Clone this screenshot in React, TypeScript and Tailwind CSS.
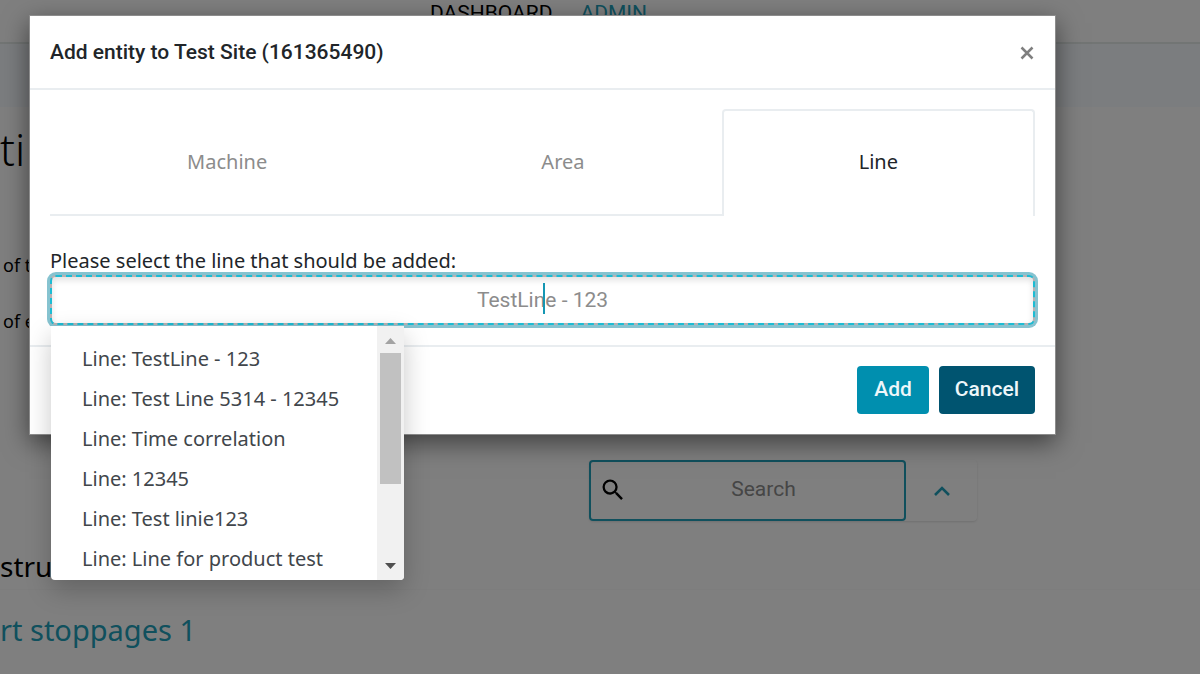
import React from "react";

const lines = [
  "Line: TestLine - 123",
  "Line: Test Line 5314 - 12345",
  "Line: Time correlation",
  "Line: 12345",
  "Line: Test linie123",
  "Line: Line for product test",
];

function Page() {
  return (
    <div className="min-h-screen overflow-hidden bg-white text-black">
      <header className="flex h-11 items-start gap-7 border-b-2 border-[#e4eae8] pl-[430px] font-['Roboto',sans-serif] text-[21px] leading-[26px]">
        <a href="#dashboard">DASHBOARD</a>
        <a href="#admin" className="text-[#20a0bb]">ADMIN</a>
      </header>
      <div className="h-[63px] bg-[#f6fafe]" />
      <main>
        <h1 className="h-[140px] pt-3 text-[44px] leading-[60px] font-light">ti</h1>
        <p className="h-14 pl-[3px] text-lg leading-9">of t</p>
        <p className="h-14 pl-[3px] text-lg leading-9">of e</p>
        <div className="mt-[101px] ml-[589px] flex h-[61px] w-[388px] rounded shadow-sm">
          <div className="flex min-w-0 flex-1 items-center rounded border-2 border-[#20a0bb] px-2 pb-0.5">
            <svg viewBox="0 0 24 24" className="size-7 shrink-0" aria-hidden="true">
              <path
                fill="currentColor"
                d="M15.5 14h-.79l-.28-.27A6.47 6.47 0 0 0 16 9.5 6.5 6.5 0 1 0 9.5 16c1.61 0 3.09-.59 4.23-1.57l.27.28v.79l5 4.99L20.49 19l-4.99-5zm-6 0C7.01 14 5 11.99 5 9.5S7.01 5 9.5 5 14 7.01 14 9.5 11.99 14 9.5 14z"
              />
            </svg>
            <input
              aria-label="Search"
              placeholder="Search"
              className="min-w-0 flex-1 bg-transparent pl-1 text-center font-['Roboto',sans-serif] text-[21px] outline-none placeholder:text-[#8c8c8c]"
            />
          </div>
          <button aria-label="Collapse" className="flex w-[71px] items-center justify-center text-[#20a0bb]">
            <svg viewBox="0 0 16 10" className="h-[10px] w-4" fill="none" stroke="currentColor" strokeWidth="2.6" aria-hidden="true">
              <path d="M1 9l7-7 7 7" />
            </svg>
          </button>
        </div>
        <h2 className="mt-6 h-[45px] border-b border-[#fafafa] text-[28px] leading-[42px]">stru</h2>
        <a href="#stoppages" className="block pt-5 text-[29px] leading-10 text-[#20a0bb]">
          rt stoppages 1
        </a>
      </main>
    </div>
  );
}

function LineSelect() {
  return (
    <div className="relative">
      <label htmlFor="line" className="block text-xl leading-7">
        Please select the line that should be added:
      </label>
      <div className="relative">
        <input
          id="line"
          role="combobox"
          aria-expanded="true"
          aria-controls="line-options"
          placeholder="TestLine - 123"
          className="block h-[50px] w-full rounded-md border-2 border-[#b9b1b1] bg-white text-center font-['Roboto',sans-serif] text-[21px] shadow-[inset_0_3px_6px_rgba(0,0,0,0.12),0_0_0_3px_#86c3d0] outline-2 -outline-offset-2 outline-dashed outline-[#1cbcd4] placeholder:text-[#8c8c8c]"
        />
        <span className="absolute top-2 left-1/2 h-[31px] w-0.5 bg-[#1597b3]" />
      </div>
      <div className="absolute top-full left-px mt-px flex h-[254px] w-[353px] overflow-hidden rounded-b bg-white shadow-[0_10px_26px_rgba(0,0,0,0.22)]">
        <ul id="line-options" role="listbox" aria-label="Lines" className="min-w-0 flex-1 pt-[13px]">
          {lines.map((line) => (
            <li key={line} role="option" aria-selected="false" className="h-10 pl-[31px] text-xl leading-10 whitespace-nowrap text-[#41464b]">
              {line}
            </li>
          ))}
        </ul>
        <div className="flex w-[27px] flex-col items-center bg-[#f1f1f1]" aria-hidden="true">
          <svg viewBox="0 0 27 27" className="size-[27px] shrink-0">
            <path d="M8 18h11l-5.500-6z" fill="#a3a3a3" />
          </svg>
          <div className="h-[131px] w-[21px] bg-[#c1c1c1]" />
          <svg viewBox="0 0 27 27" className="mt-auto size-[27px] shrink-0">
            <path d="M8 10h11l-5.500 6z" fill="#505050" />
          </svg>
        </div>
      </div>
    </div>
  );
}

function Dialog() {
  return (
    <section
      role="dialog"
      aria-label="Add entity to Test Site (161365490)"
      className="mt-[15px] mr-36 ml-[29px] border border-[#8c8c8c] bg-white text-[#212529] shadow-[0_8px_24px_rgba(0,0,0,0.5)]"
    >
      <header className="flex h-[74px] items-center justify-between border-b-2 border-[#e9edf0] px-5 pt-px">
        <h2 className="font-['Roboto',sans-serif] text-[21px] font-medium">Add entity to Test Site (161365490)</h2>
        <button aria-label="Close" className="text-[#7f7f7f]">
          <svg viewBox="0 0 16 16" className="size-4" fill="none" stroke="currentColor" strokeWidth="2.500" aria-hidden="true">
            <path d="M2.500 2.500l11 11M13.500 2.500l-11 11" />
          </svg>
        </button>
      </header>
      <div className="px-5 pt-[19px] pb-5">
        <div role="tablist" className="mb-[31px] flex h-[107px] text-xl">
          <button role="tab" aria-selected="false" className="flex-auto border-b-2 border-[#e9edf0] px-0.5 text-[#8c8c8c]">
            Machine
          </button>
          <button role="tab" aria-selected="false" className="flex-auto border-b-2 border-[#e9edf0] px-0.5 text-[#8c8c8c]">
            Area
          </button>
          <button role="tab" aria-selected="true" className="flex-auto rounded-t border-2 border-b-0 border-[#e9edf0] pb-1 text-[#212529]">
            Line
          </button>
        </div>
        <LineSelect />
      </div>
      <footer className="flex justify-end gap-[10px] border-t-2 border-[#e9edf0] px-5 pt-[19px] pb-5 font-['Roboto',sans-serif] text-[21px] font-medium text-[#eef7fa]">
        <button className="h-12 w-[72px] rounded bg-[#008faf]">Add</button>
        <button className="h-12 w-24 rounded bg-[#005470]">Cancel</button>
      </footer>
    </section>
  );
}

export default function App() {
  return (
    <div className="relative h-screen overflow-hidden font-['Noto_Sans',sans-serif]">
      <Page />
      <div className="absolute inset-0 flow-root bg-black/50">
        <Dialog />
      </div>
    </div>
  );
}
